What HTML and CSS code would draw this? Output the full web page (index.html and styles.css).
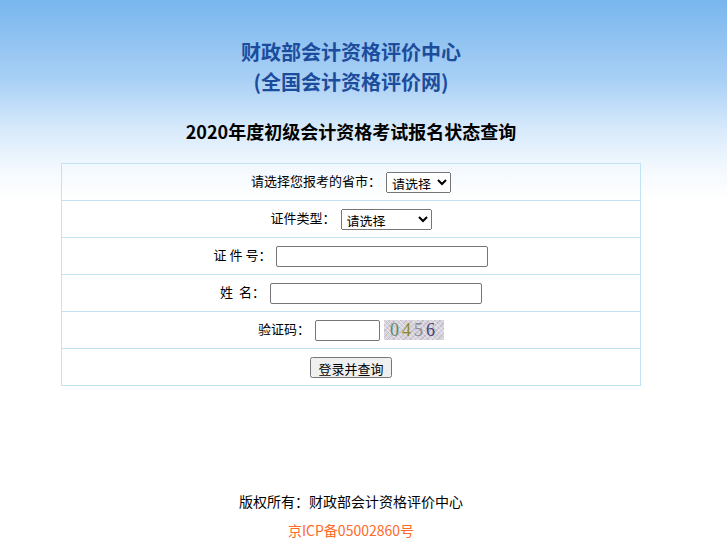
FILE: index.html
```html
<!DOCTYPE html>
<html lang="zh-CN">
<head>
<meta charset="utf-8">
<title>2020年度初级会计资格考试报名状态查询</title>
<link rel="stylesheet" href="styles.css">
</head>
<body>
<div class="page">
  <div class="brand">
    <div>财政部会计资格评价中心</div>
    <div>(全国会计资格评价网)</div>
  </div>
  <h1 class="heading">2020年度初级会计资格考试报名状态查询</h1>
  <table class="form">
    <tr><td><div class="row"><span class="lbl">请选择您报考的省市：</span><select class="sel sel-prov"><option>请选择</option></select></div></td></tr>
    <tr><td><div class="row"><span class="lbl">证件类型：</span><select class="sel sel-type"><option>请选择</option></select></div></td></tr>
    <tr><td><div class="row"><span class="lbl">证&nbsp;件&nbsp;号：</span><input class="txt" type="text"></div></td></tr>
    <tr><td><div class="row"><span class="lbl">姓&nbsp;&nbsp;名：</span><input class="txt" type="text"></div></td></tr>
    <tr><td><div class="row"><span class="lbl">验证码：</span><input class="txt txt-code" type="text"><span class="captcha"><span class="d0">0</span><span class="d4">4</span><span class="d5">5</span><span class="d6">6</span></span></div></td></tr>
    <tr><td><div class="row"><button class="btn" type="button">登录并查询</button></div></td></tr>
  </table>
  <div class="footer">
    <div class="copy">版权所有：财政部会计资格评价中心</div>
    <div class="icp">京ICP备05002860号</div>
  </div>
</div>
</body>
</html>
```
FILE: styles.css
```css
html, body {
  margin: 0;
  padding: 0;
}
body {
  min-height: 559px;
  background: linear-gradient(to bottom, #78b6ee 0px, #a9d0f5 80px, #d8eafb 130px, #f4f9fe 170px, #ffffff 200px) no-repeat;
  background-color: #ffffff;
  font-family: "Noto Sans CJK SC", "Noto Sans", sans-serif;
  color: #000;
}
.page {
  width: 702px;
  padding-top: 37px;
  text-align: center;
}
.brand {
  font-size: 20px;
  font-weight: bold;
  line-height: 30px;
  color: #1c4d9c;
}
.heading {
  margin: 19px 0 0 0;
  font-size: 18px;
  font-weight: bold;
  line-height: 30px;
  color: #000;
}
.form {
  margin: 17px auto 0 61px;
  width: 580px;
  border-collapse: collapse;
}
.form td {
  border: 1px solid #c2e3f1;
  padding: 0;
  font-size: 13px;
}
.row {
  height: 36px;
  display: flex;
  justify-content: center;
  align-items: center;
  gap: 5px;
}
.lbl {
  line-height: 18px;
  position: relative;
  top: -1px;
}
.sel {
  font-family: "Noto Sans CJK SC", sans-serif;
  font-size: 13px;
  height: 21px;
  padding: 0 0 2px 1px;
  box-sizing: border-box;
  margin: 0;
}
.sel-prov { width: 65px; }
.sel-type { width: 91px; }
.txt {
  width: 212px;
  height: 21px;
  box-sizing: border-box;
  border: 1px solid #767676;
  border-radius: 2px;
  padding: 1px 2px;
  margin: 0;
}
.txt-code { width: 65px; }
.captcha {
  display: inline-block;
  width: 60px;
  height: 20px;
  line-height: 20px;
  margin-left: -1px;
  background-color: #d6d2dc;
  background-image:
    repeating-linear-gradient(45deg, rgba(255,255,255,0.35) 0 1px, transparent 1px 3px),
    repeating-linear-gradient(-45deg, rgba(150,140,160,0.35) 0 1px, transparent 1px 4px);
  font-family: "Liberation Serif", serif;
  font-size: 18px;
  letter-spacing: 3px;
  text-align: center;
}
.d0 { color: #5d8a6a; }
.d4 { color: #8f8a2a; }
.d5 { color: #8a8a96; }
.d6 { color: #4a4470; }
.btn {
  font-family: "Noto Sans CJK SC", sans-serif;
  font-size: 13px;
  height: 21px;
  padding: 0 6px 2px;
  margin: 0;
}
.footer {
  margin-top: 101px;
  font-size: 14px;
  line-height: 29px;
}
.copy { color: #000; }
.icp { color: #ff6a2a; }
```
